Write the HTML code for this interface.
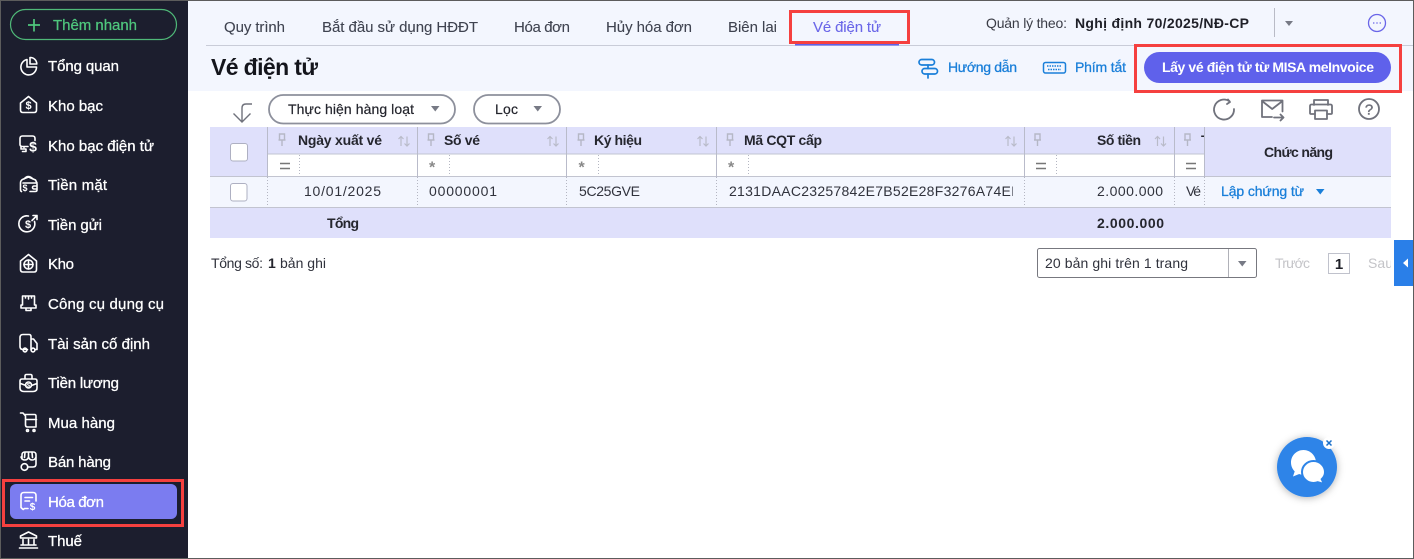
<!DOCTYPE html>
<html lang="vi"><head><meta charset="utf-8"><title>Vé điện tử</title>
<style>
html,body{margin:0;padding:0;background:#fff;width:1414px;height:559px;overflow:hidden}
svg{display:block;position:absolute;left:0;top:0}
text{font-family:"Liberation Sans",sans-serif;font-size:14px;fill:#2b2e3a;white-space:pre}
.m text{font-size:15px;fill:#fff;stroke:#fff;stroke-width:.3}
.tab{font-size:15px;fill:#3f4350;stroke:#3f4350;stroke-width:.1}
.h{font-size:14px;font-weight:700;fill:#25262e}
.c{font-size:14px;fill:#30323c}
.ic{fill:none;stroke:#fff;stroke-width:1.6;stroke-linecap:round;stroke-linejoin:round}
.lnk{font-size:14px;fill:#1a7fd9;stroke:#1a7fd9;stroke-width:.3}
.pin{fill:none;stroke:#b5b7c6;stroke-width:1.4}
.srt{fill:none;stroke:#b9bbc9;stroke-width:1.2}
.gi{fill:none;stroke:#70727c;stroke-width:1.8;stroke-linecap:round;stroke-linejoin:round}
.tri{fill:#777a85}
.fs{font-size:16px;font-weight:700;fill:#888}
.dot{stroke:#b4b6c2;stroke-width:1;stroke-dasharray:1 2}
.d{font-size:11px;font-weight:700;fill:#fff;text-anchor:middle}
</style></head><body>
<svg width="1414" height="559" viewBox="0 0 1414 559" xmlns="http://www.w3.org/2000/svg">
<defs>
<g id="pin"><path class="pin" d="M-2.500 -6h5v6h-5zM-3.500 0h7M0 0v6"/></g>
<g id="srt"><path class="srt" d="M-3 5v-9.500M-5.500 -2l2.500-2.500 2.500 2.500M3 -4.500v9.500M.5 2.500l2.500 2.500 2.500-2.500"/></g>
<filter id="sh" x="-50%" y="-50%" width="200%" height="200%"><feDropShadow dx="0" dy="1" stdDeviation="4" flood-color="#000" flood-opacity=".3"/></filter>
<clipPath id="cl1"><rect x="720" y="178" width="293" height="28"/></clipPath>
<clipPath id="cl2"><rect x="1178" y="128" width="26" height="26"/></clipPath>
<clipPath id="cl3"><rect x="1360" y="250" width="31" height="28"/></clipPath>
</defs>

<!-- backgrounds -->
<rect width="1414" height="559" fill="#fff"/>
<rect x="188" y="1" width="1226" height="90" fill="#f3f6fe"/>
<rect x="0" y="0" width="188" height="559" fill="#1c1e2e"/>

<!-- top header -->
<line x1="206" y1="45.500" x2="1414" y2="45.500" stroke="#c9ccd8" stroke-width="1"/>
<text class="tab" x="224" y="32" textLength="61">Quy trình</text>
<text class="tab" x="322" y="32" textLength="156">Bắt đầu sử dụng HĐĐT</text>
<text class="tab" x="514" y="32" textLength="56">Hóa đơn</text>
<text class="tab" x="606" y="32" textLength="86">Hủy hóa đơn</text>
<text class="tab" x="728" y="32" textLength="49">Biên lai</text>
<text class="tab" x="813" y="32" textLength="68" style="fill:#6a66e8;stroke:#6a66e8">Vé điện tử</text>
<rect x="795" y="43.500" width="104" height="2" fill="#5f61eb"/>
<rect x="790.500" y="11.500" width="118" height="31" fill="none" stroke="#f5403f" stroke-width="3"/>

<text x="986" y="28" textLength="81" style="font-size:14px;fill:#3a3c46">Quản lý theo:</text>
<text x="1075" y="28" textLength="174" style="font-size:14px;font-weight:700;fill:#1f2028">Nghị định 70/2025/NĐ-CP</text>
<line x1="1274.500" y1="8" x2="1274.500" y2="37" stroke="#b9bbc6"/>
<path class="tri" d="M1285 21h8l-4 5z"/>
<circle cx="1377" cy="23" r="8.500" fill="none" stroke="#6a66e8" stroke-width="1.300"/>
<path d="M1373 23h1.400M1376.300 23h1.400M1379.600 23h1.400" stroke="#6a66e8" stroke-width="1.200"/>

<text x="211" y="75" textLength="107" style="font-size:23px;font-weight:700;fill:#14151c">Vé điện tử</text>

<g fill="none" stroke="#1a7fd9" stroke-width="1.700" stroke-linejoin="round" stroke-linecap="round">
<rect x="919" y="59.500" width="15.500" height="5.500" rx="2.700"/>
<rect x="922" y="68.500" width="15.500" height="5.500" rx="2.700"/>
<path d="M928 65v3.500M928 74v4"/>
</g>
<text class="lnk" x="948" y="72" textLength="69">Hướng dẫn</text>
<rect x="1043.500" y="62.500" width="22" height="10.500" rx="2" fill="none" stroke="#1a7fd9" stroke-width="1.500"/>
<path d="M1047 66h15M1048 69.500h13" stroke="#1a7fd9" stroke-width="1.500" stroke-dasharray="1.500 1"/>
<text class="lnk" x="1075" y="72" textLength="51">Phím tắt</text>

<rect x="1144" y="52" width="247" height="31" rx="15.500" fill="#5f61eb"/>
<text x="1162" y="72" textLength="212" style="font-size:14px;font-weight:700;fill:#fff">Lấy vé điện tử từ MISA meInvoice</text>
<rect x="1135.500" y="45.500" width="265" height="46" fill="none" stroke="#f5403f" stroke-width="3"/>

<!-- toolbar -->
<path d="M252 104h-6q-4 0-4 4v14M233.500 113.500l8.500 8.500 8.500-8.500" fill="none" stroke="#70727c" stroke-width="1.400"/>
<rect x="269" y="95" width="186" height="28.500" rx="14.250" fill="#fff" stroke="#8d909c" stroke-width="1.800"/>
<text x="288" y="114" textLength="126" style="font-size:14px;fill:#23242c;stroke:#23242c;stroke-width:.2">Thực hiện hàng loạt</text>
<path class="tri" d="M431 106h8.500l-4.250 5.500z"/>
<rect x="474" y="95" width="86" height="28.500" rx="14.250" fill="#fff" stroke="#8d909c" stroke-width="1.800"/>
<text x="495" y="114" textLength="23" style="font-size:14px;fill:#23242c;stroke:#23242c;stroke-width:.2">Lọc</text>
<path class="tri" d="M533.500 106h8.500l-4.250 5.500z"/>

<path class="gi" d="M1229.500 101.200a10 10 0 1 0 4.500 7.800"/><path class="gi" d="M1228 99.500l2 2.500-3 2"/>
<path class="gi" d="M1272 117h-10v-16.500h20.500v11M1262 101l10.200 8 10.300-8M1274 117.500h9M1280.500 114.500l3 3-3 3"/>
<path class="gi" d="M1314 105v-5h14v5M1315 114h-4a1 1 0 0 1-1-1v-7a1.500 1.500 0 0 1 1.500-1.500h19a1.500 1.500 0 0 1 1.500 1.500v7a1 1 0 0 1-1 1h-4"/><path class="gi" d="M1315 110.500h12v8.500h-12z"/>
<circle class="gi" cx="1369" cy="109" r="10"/>
<text x="1369" y="114.500" text-anchor="middle" style="font-size:15px;fill:#70727c;stroke:#70727c;stroke-width:.4">?</text>

<!-- table -->
<rect x="210" y="127" width="1181" height="49.500" fill="#dfe0fb"/>
<rect x="267" y="154" width="937.500" height="22" fill="#fff"/>
<rect x="210" y="177" width="1181" height="30" fill="#f3f6fe"/>
<rect x="210" y="208" width="1181" height="30" fill="#dfe0fb"/>
<path d="M267 154h938M210 176.500h1181M210 207.500h1181" stroke="#c2c4d0" stroke-width="1.100" fill="none"/>
<g stroke="#b9bbca" stroke-width="1">
<path d="M267.500 127v50M417.500 127v50M566.500 127v50M716.500 127v50M1024.500 127v50M1174.500 127v50M1204.500 127v50"/>
</g>
<path class="dot" d="M267.500 177v30M417.500 177v30M566.500 177v30M716.500 177v30M1024.500 177v30M1174.500 177v30M1204.500 177v30M299.500 155v21M449.500 155v21M598.500 155v21M748.500 155v21M1056.500 155v21"/>

<rect x="230.500" y="143.500" width="17" height="17.500" rx="2.500" fill="#fff" stroke="#aeb0c2"/>
<rect x="230.500" y="183.500" width="16.500" height="17.500" rx="2.500" fill="#fff" stroke="#aeb0c2"/>

<use href="#pin" x="282" y="140"/><use href="#pin" x="431" y="140"/><use href="#pin" x="581" y="140"/><use href="#pin" x="730" y="140"/><use href="#pin" x="1037.500" y="140"/><use href="#pin" x="1187.500" y="140"/>
<use href="#srt" x="404" y="141"/><use href="#srt" x="553" y="141"/><use href="#srt" x="703" y="141"/><use href="#srt" x="1011" y="141"/><use href="#srt" x="1160.500" y="141"/>

<text class="h" x="298" y="145" textLength="84">Ngày xuất vé</text>
<text class="h" x="444" y="145" textLength="36">Số vé</text>
<text class="h" x="594" y="145" textLength="48">Ký hiệu</text>
<text class="h" x="744" y="145" textLength="78">Mã CQT cấp</text>
<text class="h" x="1097" y="145" textLength="44">Số tiền</text>
<text class="h" x="1201" y="145" clip-path="url(#cl2)">T</text>
<text class="h" x="1264" y="157" textLength="69">Chức năng</text>

<path d="M280 163.500h10M280 168.500h10M1036 163.500h10M1036 168.500h10M1186 163.500h10M1186 168.500h10" stroke="#777" stroke-width="1.500"/>
<text class="fs" x="429" y="172.500">*</text><text class="fs" x="578.500" y="172.500">*</text><text class="fs" x="728" y="172.500">*</text>

<text class="c" x="304" y="196" textLength="77">10/01/2025</text>
<text class="c" x="429" y="196" textLength="68">00000001</text>
<text class="c" x="579" y="196" textLength="61">5C25GVE</text>
<text class="c" x="729" y="196" textLength="286" clip-path="url(#cl1)">2131DAAC23257842E7B52E28F3276A74EI</text>
<text class="c" x="1097" y="196" textLength="66">2.000.000</text>
<text class="c" x="1186" y="196" textLength="15">Vé</text>
<text class="lnk" x="1221" y="196" textLength="83">Lập chứng từ</text>
<path d="M1316 189h8.500l-4.250 5.500z" fill="#1a7fd9"/>

<text class="h" x="327" y="228" textLength="32">Tổng</text>
<text class="h" x="1097" y="228" textLength="67">2.000.000</text>

<!-- footer -->
<text class="c" x="211" y="268" textLength="52">Tổng số:</text>
<text class="h" x="268" y="268">1</text>
<text class="c" x="280" y="268" textLength="46">bản ghi</text>

<rect x="1037.500" y="248.500" width="219" height="29" rx="2" fill="#fff" stroke="#77787f"/>
<line x1="1228.500" y1="249" x2="1228.500" y2="277" stroke="#b0b1b8"/>
<text class="c" x="1045" y="268" textLength="143">20 bản ghi trên 1 trang</text>
<path class="tri" d="M1238 261h8.500l-4.250 5.500z"/>
<text class="c" x="1275" y="268" textLength="35" style="fill:#c4c4c8">Trước</text>
<rect x="1328.500" y="253.500" width="21" height="20" fill="#fff" stroke="#c0c2cc"/>
<text class="h" x="1339" y="269" text-anchor="middle" style="font-size:15px;fill:#1f2028">1</text>
<text class="c" x="1368" y="268" textLength="25" clip-path="url(#cl3)" style="fill:#c4c4c8">Sau</text>
<rect x="1394" y="240" width="20" height="46" fill="#2a7fe8"/>
<path d="M1408 258.500v9l-5-4.500z" fill="#fff"/>

<!-- chat -->
<circle cx="1307" cy="467" r="30" fill="#2d84e8" filter="url(#sh)"/>
<path d="M1303.500 450c-6.900 0-12.500 5.600-12.500 12.500 0 3.500 1.400 6.600 3.700 8.900l-1.700 5.100 6.200-2.500c1.300.5 2.800.8 4.300.8 6.900 0 12.500-5.600 12.500-12.300s-5.600-12.500-12.500-12.500z" fill="#fff"/>
<path d="M1313.500 461c-6.400 0-11.500 5-11.500 11s5.100 11 11.500 11c1.500 0 2.900-.3 4.200-.8l6.300 1.800-2.300-4.800c2.200-2 3.300-4.500 3.300-7.200 0-6-5.100-11-11.500-11z" fill="#fff" stroke="#2d84e8" stroke-width="2"/>
<circle cx="1329" cy="443" r="6" fill="#fff"/>
<path d="M1326.500 440.500l5 5M1331.500 440.500l-5 5" stroke="#1a6fc9" stroke-width="1.500"/>

<!-- sidebar -->
<rect x="10.500" y="9.500" width="166" height="30" rx="15" fill="none" stroke="#4fb878" stroke-width="1.200"/>
<path d="M34 19v12.500M28 25h12" stroke="#4fc67d" stroke-width="1.700"/>
<text x="53" y="30" textLength="84" style="font-size:15px;fill:#4fc67d;stroke:#4fc67d;stroke-width:.25">Thêm nhanh</text>

<rect x="10" y="484" width="167" height="35" rx="6" fill="#7b7cf0"/>
<rect x="3.500" y="480.500" width="179" height="45" fill="none" stroke="#f5403f" stroke-width="3"/>

<g class="m">
<text x="48" y="71" textLength="71">Tổng quan</text>
<text x="48" y="111" textLength="55">Kho bạc</text>
<text x="48" y="151" textLength="106">Kho bạc điện tử</text>
<text x="48" y="190" textLength="59">Tiền mặt</text>
<text x="48" y="230" textLength="54">Tiền gửi</text>
<text x="48" y="269" textLength="26">Kho</text>
<text x="48" y="309" textLength="116">Công cụ dụng cụ</text>
<text x="48" y="349" textLength="102">Tài sản cố định</text>
<text x="48" y="388" textLength="71">Tiền lương</text>
<text x="48" y="428" textLength="67">Mua hàng</text>
<text x="48" y="467" textLength="63">Bán hàng</text>
<text x="48" y="507" textLength="56">Hóa đơn</text>
<text x="48" y="546" textLength="34">Thuế</text>
</g>

<g class="ic">
<!-- Tổng quan -->
<path d="M27 59.500a7.800 7.800 0 1 0 9.500 7.500h-9.500z"/><path d="M30 57.500a6.500 6.500 0 0 1 6.800 6.500h-6.800z"/>
<!-- Kho bạc -->
<path d="M20.500 103l8-6.500 8 6.500v7q0 2.500-2.500 2.500h-11q-2.500 0-2.500-2.500z"/>
<!-- Kho bạc điện tử -->
<path d="M28 146.500h-5.500q-2.500 0-2.500-2v-6q0-2.500 2.500-2.500h10q2.500 0 2.500 2.500v2M21 147v2h5v2.500h-3.500M24 146.500v1"/>
<!-- Tiền mặt -->
<path d="M20.500 187v-4q0-3 3-4l5-2 7 3 1.500 3h-14M24 179q4-5 9 0M37 184v6q0 1.500-2 1.500h-5M37 186h-3a1.500 1.500 0 0 0 0 3h3M20.500 187v3q0 1 1 1.500"/>
<!-- Tiền gửi -->
<path d="M34.500 221.500a8 8 0 1 1-6-5.500M32 220.500l5-5M33 215.500h4v4"/>
<!-- Kho -->
<path d="M20.500 261l8-6.500 8 6.500v8.500q0 2.500-2.500 2.500h-11q-2.500 0-2.500-2.500z"/><circle cx="28.500" cy="264.500" r="4.500"/><path d="M28.500 260v9M24 264.500h9"/>
<!-- Công cụ -->
<path d="M22.500 296h12v9h1.500v3h-15v-3h1.500zM28.500 296v3M26 308v2.500h5V308M25.500 296v2M31.500 296v2"/>
<!-- Tài sản -->
<path d="M27.500 349.500h-4.500q-3 0-3-3v-9q0-3 3-3h6q2 0 2 2v13M31 339h2.500l3.500 4.500v6h-2M31 349.500h.5"/><circle cx="25" cy="350" r="1.900"/><circle cx="33" cy="350" r="1.900"/>
<!-- Tiền lương -->
<path d="M22 379h13q2 0 2 2v7q0 3.500-4 3.500H24q-4 0-4-3.500v-7q0-2 2-2zM25 379v-3q0-1.500 1.500-1.500h4q1.500 0 1.500 1.500v3M20.500 383.500l5.500 2M37 383.500l-5.500 2"/><circle cx="28.500" cy="385" r="3"/>
<!-- Mua hàng -->
<path d="M20.500 413h2.500l2.500 3v9q0 2 2 2h8.500V416q0-1.500-1.500-1.500h-10M25.500 419.500h11"/><circle cx="27.500" cy="430.500" r="1"/><circle cx="34" cy="430.500" r="1"/>
<!-- Bán hàng -->
<path d="M22 459v-4q0-3 3-3h8q3 0 3 3v9q0 3-3 3h-5.500M21 457q1 3 3.800 3t3.700-3q1 3 3.700 3t3.800-3M25 452.500l-.5 5M32 452.500l.5 5M28.500 452.500v5"/><circle cx="24.500" cy="467" r="3.300"/>
<!-- Hóa đơn -->
<path d="M28 508.500h-3.500l-1.300 1-1.200-1-1-1v-12q0-3 3-3h9q3 0 3 3v5.500M25 497.500h7.500M25 501h4.500"/>
<!-- Thuế -->
<path d="M28.500 532l8 4v2h-16v-2zM23 539.500v5M28.500 539.500v5M34 539.500v5M21 545h15M19.500 548h18"/>
</g>

<g>
<text class="d" x="28.500" y="109">$</text>
<text class="d" x="33" y="151.500" style="font-size:14px">$</text>
<text class="d" x="25" y="191" style="font-size:9px">$</text>
<text class="d" x="28" y="228" style="font-size:11px">$</text>
<text class="d" x="28.500" y="387.500" style="font-size:6px">$</text>
<text class="d" x="32.500" y="510" style="font-size:10px">$</text>
</g>

<!-- window border -->
<rect x=".5" y=".5" width="1413" height="558" fill="none" stroke="#5c5c5c" stroke-width="1"/>
</svg>
</body></html>
